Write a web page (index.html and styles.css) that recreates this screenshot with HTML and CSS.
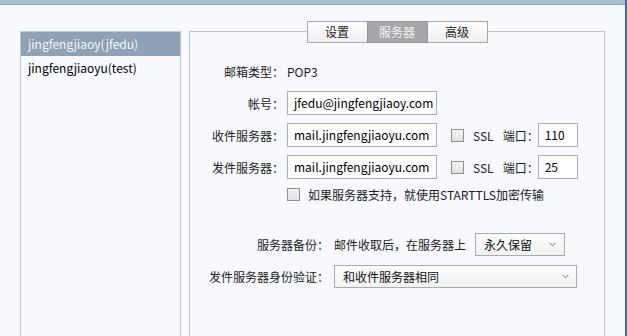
FILE: index.html
```html
<!DOCTYPE html>
<html lang="zh-CN">
<head>
<meta charset="utf-8">
<title>账户设置</title>
<link rel="stylesheet" href="styles.css">
</head>
<body>
<div class="topbar"></div>
<div class="main">
  <ul class="accounts">
    <li class="account selected">jingfengjiaoy(jfedu)</li>
    <li class="account">jingfengjiaoyu(test)</li>
  </ul>
  <section class="panel">
    <div class="tabs">
      <div class="tab">设置</div>
      <div class="tab active">服务器</div>
      <div class="tab">高级</div>
    </div>
    <div class="form">
      <div class="label">邮箱类型：</div>
      <div class="value">POP3</div>
      <div></div>

      <div class="label">帐号：</div>
      <div class="field">jfedu@jingfengjiaoy.com</div>
      <div></div>

      <div class="label">收件服务器：</div>
      <div class="field">mail.jingfengjiaoyu.com</div>
      <div class="extra"><span class="check"></span><span class="ssl">SSL</span><span class="port-label">端口：</span><span class="field port">110</span></div>

      <div class="label">发件服务器：</div>
      <div class="field">mail.jingfengjiaoyu.com</div>
      <div class="extra"><span class="check"></span><span class="ssl">SSL</span><span class="port-label">端口：</span><span class="field port">25</span></div>
    </div>
    <div class="tls"><span class="check"></span><span class="tls-text">如果服务器支持，就使用STARTTLS加密传输</span></div>
    <div class="form2">
      <div class="label">服务器备份：</div>
      <div class="backup"><span>邮件收取后，在服务器上</span><div class="select short"><span>永久保留</span><svg width="7" height="5" viewBox="0 0 7 5"><polyline points="0.5,0.8 3.5,3.8 6.5,0.8" fill="none" stroke="#6d6d6d" stroke-width="1"/></svg></div></div>
      <div class="label">发件服务器身份验证：</div>
      <div class="select long"><span>和收件服务器相同</span><svg width="7" height="5" viewBox="0 0 7 5"><polyline points="0.5,0.8 3.5,3.8 6.5,0.8" fill="none" stroke="#6d6d6d" stroke-width="1"/></svg></div>
    </div>
  </section>
</div>
</body>
</html>
```

FILE: styles.css
```css
* { box-sizing: border-box; }
html, body { margin: 0; padding: 0; }
body {
  width: 627px;
  height: 336px;
  overflow: hidden;
  background: #f8f9fd;
  border-right: 2px solid #46679a;
  font-family: "Noto Sans CJK SC", "Noto Sans", sans-serif;
  font-size: 12px;
  color: #1b1b1b;
  text-spacing-trim: space-all;
}
.topbar {
  height: 5px;
  background: #a9bed7;
  border-bottom: 1px solid #8ea3bd;
}
.main {
  display: flex;
  gap: 8px;
  padding-top: 26px;
  padding-left: 20px;
}
.accounts {
  list-style: none;
  margin: 0;
  padding: 0;
  width: 161px;
  height: 320px;
  border: 1px solid #c6c6c6;
  font-size: 12px;
}
.account {
  height: 24px;
  line-height: 24px;
  padding-left: 7px;
  color: #000;
}
.account.selected {
  background: #8fa1b4;
  color: #f4f6f8;
}
.panel {
  width: 416px;
  height: 320px;
  border: 1px solid #c2c2c2;
  border-bottom: none;
}
.tabs {
  display: flex;
  justify-content: center;
  margin-top: -11px;
}
.tab {
  width: 61px;
  height: 22px;
  line-height: 20px;
  text-align: center;
  border: 1px solid #a9a9a9;
  background: linear-gradient(#ffffff, #eeeeee);
  color: #222;
}
.tab + .tab { margin-left: -1px; }
.tab.active {
  background: #a7a7a7;
  border-color: #969696;
  color: #f2f2f2;
  position: relative;
}
.form {
  display: grid;
  grid-template-columns: 94px 150px auto;
  grid-auto-rows: 24px;
  row-gap: 8px;
  column-gap: 3px;
  margin-top: 16px;
  align-items: center;
}
.label {
  text-align: right;
  white-space: nowrap;
}
.field {
  height: 24px;
  line-height: 22px;
  border: 1px solid #acadb1;
  background: #fff;
  padding-left: 6px;
  color: #000;
  white-space: nowrap;
  overflow: hidden;
}
.extra {
  display: flex;
  align-items: center;
  padding-left: 11px;
}
.check {
  display: inline-block;
  width: 13px;
  height: 13px;
  border: 1px solid #8f8f8f;
  background: linear-gradient(#f3f3f3, #e2e2e2);
  flex: none;
}
.ssl { margin-left: 9px; }
.port-label { margin-left: 9px; }
.field.port {
  display: block;
  width: 40px;
  margin-left: -1px;
}
.tls {
  display: flex;
  align-items: center;
  margin-top: 8px;
  margin-left: 97px;
  height: 14px;
}
.tls-text { margin-left: 8px; }
.form2 {
  display: grid;
  grid-template-columns: 139px auto;
  grid-auto-rows: 23px;
  row-gap: 9px;
  column-gap: 5px;
  margin-top: 32px;
  align-items: center;
}
.backup {
  display: flex;
  align-items: center;
  gap: 9px;
}
.select {
  display: flex;
  align-items: center;
  justify-content: space-between;
  height: 23px;
  border: 1px solid #acacac;
  background: linear-gradient(#fdfdfd, #f2f2f2);
  padding-left: 8px;
  padding-right: 8px;
  color: #111;
}
.select.short { width: 90px; }
.select.long { width: 243px; padding-right: 7px; }
```
